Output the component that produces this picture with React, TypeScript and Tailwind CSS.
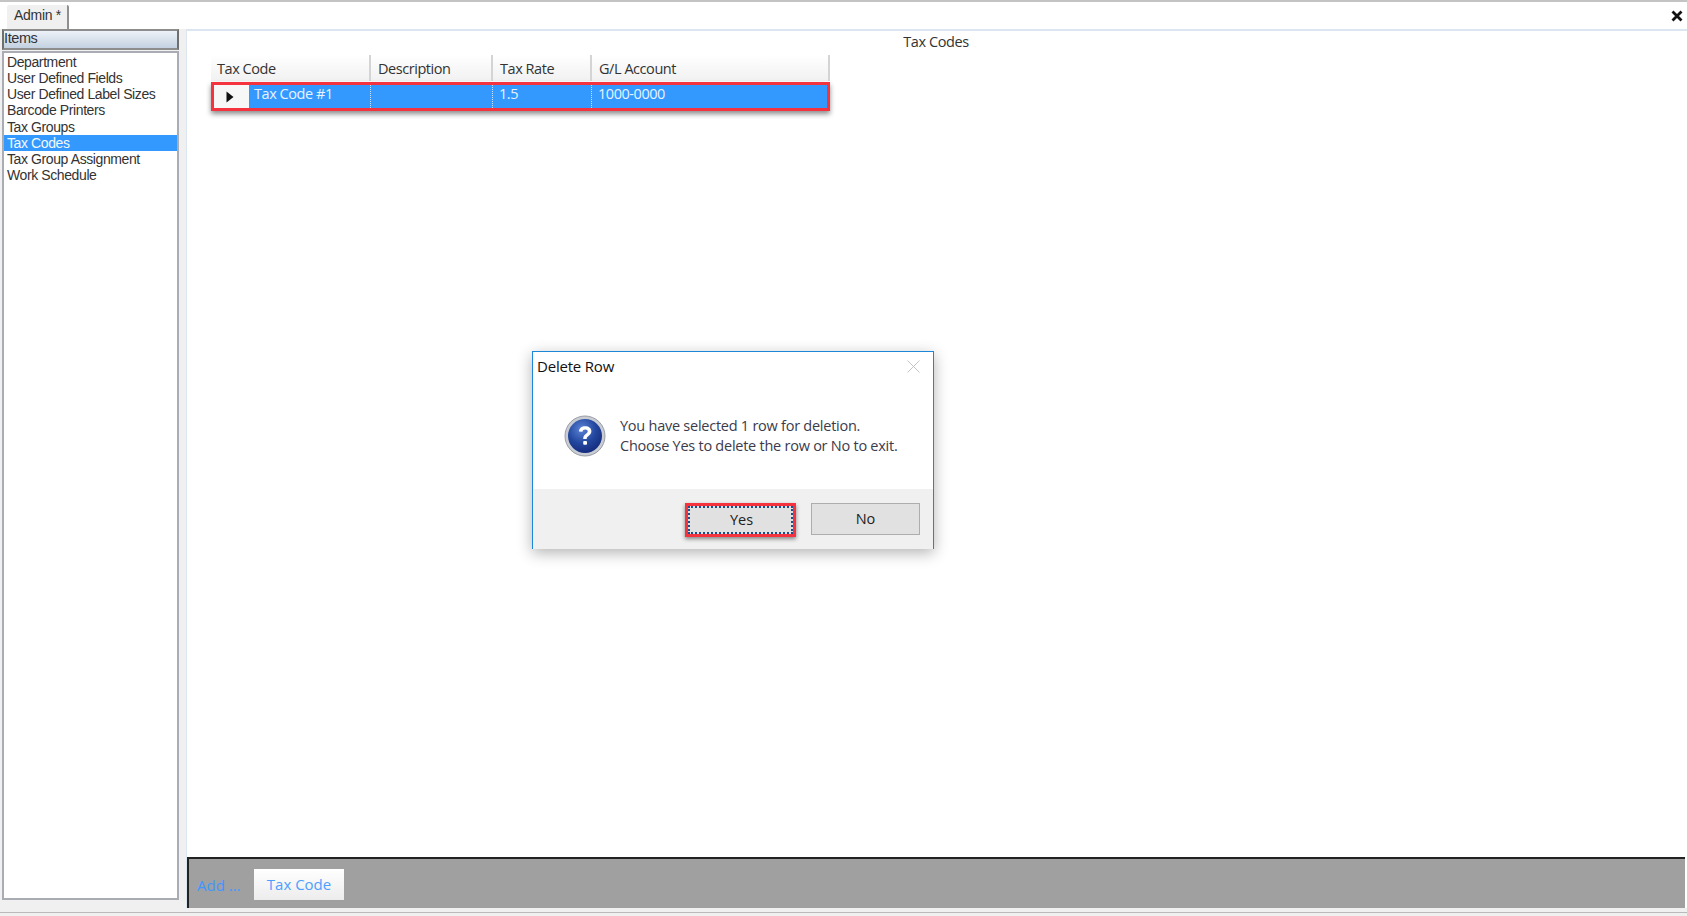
const items = [
  "Department",
  "User Defined Fields",
  "User Defined Label Sizes",
  "Barcode Printers",
  "Tax Groups",
  "Tax Codes",
  "Tax Group Assignment",
  "Work Schedule",
];

function QuestionIcon() {
  return (
    <svg width="42" height="42" viewBox="0 0 42 42" className="shrink-0">
      <defs>
        <radialGradient id="ball" cx="40%" cy="30%" r="75%">
          <stop offset="0%" stopColor="#5c84d6" />
          <stop offset="55%" stopColor="#23479f" />
          <stop offset="100%" stopColor="#14297a" />
        </radialGradient>
      </defs>
      <circle cx="21" cy="21" r="20" fill="#c9ccd2" stroke="#9a9ea6" />
      <circle cx="21" cy="21" r="17" fill="url(#ball)" />
      <path
        d="M15 16.500c0-3.400 2.700-5.300 6.200-5.300 3.700 0 6.200 2 6.200 5 0 2.400-1.400 3.600-2.900 4.700-1.300 1-1.800 1.600-1.800 3.100h-3.500c0-2.700.8-3.800 2.500-5.100 1.200-.9 2-1.500 2-2.600 0-1.200-1-1.900-2.500-1.900-1.700 0-2.600.9-2.700 2.300z"
        fill="#fff"
      />
      <rect x="19.200" y="26" width="3.800" height="3.800" rx="1" fill="#fff" />
    </svg>
  );
}

export default function App() {
  return (
    <div className="relative flex h-[916px] w-[1687px] flex-col overflow-hidden bg-[#f0f0f0] font-['Liberation_Sans',sans-serif] text-[14px] text-[#222]">
      {/* tab strip */}
      <div className="flex h-[29px] shrink-0 items-end justify-between border-t-2 border-[#c4c4c4] bg-white pl-[7px] pr-[3px]">
        <div className="flex h-[24px] w-[62px] items-center justify-center rounded-t-[2px] border-r-2 border-[#8f8f8f] bg-[#f0f0f0] pl-[1px] pb-[3px] text-[14px] tracking-[-0.3px] text-[#333]">
          Admin *
        </div>
        <svg width="12" height="12" viewBox="0 0 12 12" className="mb-[7px] mr-[1px]">
          <path d="M1.500 1.500l9 9M10.500 1.500l-9 9" stroke="#111" strokeWidth="2.800" />
        </svg>
      </div>

      <div className="mb-[3px] flex min-h-0 flex-1 border-b border-[#b9b9b9] pb-[4px]">
        {/* left list */}
        <div className="flex w-[186px] shrink-0 flex-col pb-[8px] pl-[2px] pr-[7px]">
          <div className="h-[21px] shrink-0 border-2 border-b-[#8d8d8d] border-l-[#6f6f6f] border-r-[#6f6f6f] border-t-[#8d8d8d] bg-gradient-to-b from-[#edf2f8] to-[#c3d1e0] text-[14.500px] leading-[14px] tracking-[-0.4px] text-[#333]">
            Items
          </div>
          <ul className="mt-[1px] min-h-0 flex-1 border-2 border-[#a9acb3] bg-white pt-[1px] text-[14px] leading-[16.150px] tracking-[-0.4px] text-[#333]">
            {items.map((item) => (
              <li
                key={item}
                className={
                  item === "Tax Codes"
                    ? "h-[16.150px] bg-[#3399ff] pl-[3px] text-[#f3f7fb]"
                    : "h-[16.150px] pl-[3px]"
                }
              >
                {item}
              </li>
            ))}
          </ul>
        </div>

        {/* main area */}
        <div className="flex min-w-0 flex-1 flex-col border-l border-t-2 border-[#dbe6f1] bg-white pr-[2px]">
          <div className="flex-1 px-[24px]">
            <div className="pt-[2px] text-center font-['Open_Sans',sans-serif] text-[14.500px] leading-[18px] tracking-[-0.4px] text-[#333]">
              Tax Codes
            </div>
            {/* grid */}
            <div className="mt-[4px] w-[619px] font-['Open_Sans',sans-serif] tracking-[-0.45px] text-[#333]">
              <div className="flex h-[26px] items-end bg-gradient-to-b from-white to-[#f1f1f1] text-[14.500px] leading-[20px]">
                <div className="h-[26px] w-[160px] border-r-2 border-[#d4d4d4] pl-[6px] pt-[4px]">Tax Code</div>
                <div className="h-[26px] w-[122px] border-r-2 border-[#d4d4d4] pl-[7px] pt-[4px]">Description</div>
                <div className="h-[26px] w-[99px] border-r-2 border-[#d4d4d4] pl-[7px] pt-[4px]">Tax Rate</div>
                <div className="h-[26px] w-[238px] border-r-2 border-[#d4d4d4] pl-[7px] pt-[4px]">G/L Account</div>
              </div>
              <div className="mt-[1px] flex h-[29px] border-[3px] border-[#f4333f] bg-[#3399ff] text-[14.500px] leading-[18px] text-[#e8f3ff] shadow-[0_3px_5px_rgba(0,0,0,0.45)]">
                <div className="flex w-[35px] shrink-0 items-center justify-center bg-[#f7f7f7] pr-[4px]">
                  <svg width="8" height="12" viewBox="0 0 8 12">
                    <path d="M0.500 0.500L7.500 6L0.500 11.500Z" fill="#111" />
                  </svg>
                </div>
                <div className="w-[122px] border-r border-dotted border-[#cfe4fb] pl-[5px]">Tax Code #1</div>
                <div className="w-[122px] border-r border-dotted border-[#cfe4fb]" />
                <div className="w-[99px] border-r border-dotted border-[#cfe4fb] pl-[6px]">1.5</div>
                <div className="flex-1 pl-[6px]">1000-0000</div>
              </div>
            </div>
          </div>

          {/* bottom bar */}
          <div className="flex h-[51px] shrink-0 items-center border-l-2 border-t-2 border-l-[#222] border-t-[#222] bg-[#a0a0a0] pl-[8px] pr-[1px] font-['Open_Sans',sans-serif] text-[15px]">
            <span className="mt-[4px] w-[57px] text-[#3f97ff]">Add ...</span>
            <div className="mt-[1px] flex h-[31px] w-[90px] items-center justify-center bg-gradient-to-b from-white to-[#ececec] text-[#4d9fff]">
              Tax Code
            </div>
          </div>
        </div>
      </div>

      {/* dialog */}
      <div className="absolute left-[532px] top-[351px] flex h-[198px] w-[402px] flex-col border border-b-0 border-[#1c86d8] bg-white font-['Open_Sans',sans-serif] shadow-[0_4px_14px_rgba(0,0,0,0.3)]">
        <div className="flex h-[28px] shrink-0 items-center justify-between pl-[4px] pr-[13px] text-[15px] tracking-[-0.2px] text-[#111]">
          <span>Delete Row</span>
          <svg width="13" height="13" viewBox="0 0 13 13">
            <path d="M0.500 0.500l12 12M12.500 0.500l-12 12" stroke="#c4c4c4" strokeWidth="1" />
          </svg>
        </div>
        <div className="flex flex-1 items-center gap-[14px] pl-[31px] pt-[2px]">
          <QuestionIcon />
          <p className="text-[14.500px] leading-[20px] tracking-[-0.25px] text-[#3b3b4b]">
            You have selected 1 row for deletion.
            <br />
            Choose Yes to delete the row or No to exit.
          </p>
        </div>
        <div className="flex h-[60px] shrink-0 items-start justify-end gap-[15px] bg-[#f0f0f0] pr-[13px] pt-[14px]">
          <button className="h-[34px] w-[111px] border-[3px] border-[#f4333f] bg-[#e1e1e1] text-[14.500px] text-[#222] shadow-[0_2px_4px_rgba(0,0,0,0.45)]">
            <span className="flex h-full w-full items-center justify-center border-2 border-dotted border-[#1a4f8f] pl-[2px]">Yes</span>
          </button>
          <button className="h-[32px] w-[109px] border border-[#adadad] bg-[#e1e1e1] text-[14.500px] text-[#222]">
            No
          </button>
        </div>
      </div>
    </div>
  );
}
